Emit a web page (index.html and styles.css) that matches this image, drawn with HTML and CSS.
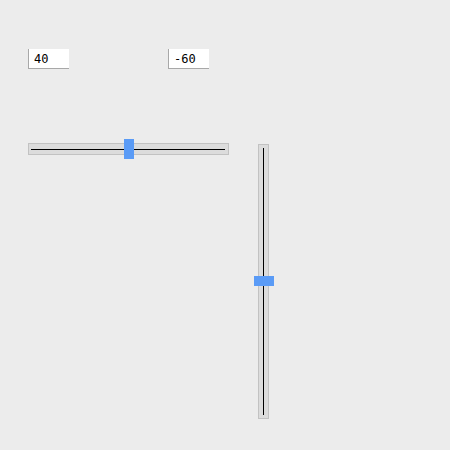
FILE: index.html
```html
<!DOCTYPE html>
<html>
<head>
<meta charset="utf-8">
<link rel="stylesheet" href="styles.css">
</head>
<body>
<div class="page">
  <div class="inputs">
    <input class="num" type="text" value="40">
    <input class="num" type="text" value="-60">
  </div>
  <div class="sliders">
    <div class="hslider">
      <div class="hline"></div>
      <div class="hthumb"></div>
    </div>
    <div class="vslider">
      <div class="vline"></div>
      <div class="vthumb"></div>
    </div>
  </div>
</div>
</body>
</html>
```
FILE: styles.css
```css
html, body {
  margin: 0;
  padding: 0;
  background: #ececec;
  width: 450px;
  height: 450px;
  overflow: hidden;
}
.page {
  padding: 49px 0 0 28px;
}
.inputs {
  display: flex;
  gap: 99px;
}
.num {
  box-sizing: border-box;
  width: 41px;
  height: 20px;
  margin: 0;
  padding: 0 0 0 5px;
  border: none;
  border-left: 1px solid #a8a8a8;
  border-bottom: 1px solid #a8a8a8;
  background: #fff;
  font-family: "DejaVu Sans Mono", monospace;
  font-size: 12px;
  color: #000;
  outline: none;
}
.sliders {
  display: flex;
  align-items: flex-start;
  gap: 29px;
  margin-top: 74px;
}
.hslider {
  position: relative;
  box-sizing: border-box;
  width: 201px;
  height: 12px;
  background: #dcdcdc;
  border: 1px solid #c2c2c2;
}
.hline {
  position: absolute;
  left: 2px;
  right: 3px;
  top: 5px;
  height: 1px;
  background: #000;
}
.hthumb {
  position: absolute;
  left: 95px;
  top: -5px;
  width: 10px;
  height: 20px;
  background: #5a9bf6;
}
.vslider {
  position: relative;
  box-sizing: border-box;
  width: 11px;
  height: 275px;
  margin-top: 1px;
  background: #dcdcdc;
  border: 1px solid #c2c2c2;
}
.vline {
  position: absolute;
  top: 3px;
  bottom: 3px;
  left: 4px;
  width: 1px;
  background: #000;
}
.vthumb {
  position: absolute;
  left: -5px;
  top: 131px;
  width: 20px;
  height: 10px;
  background: #5a9bf6;
}
```
